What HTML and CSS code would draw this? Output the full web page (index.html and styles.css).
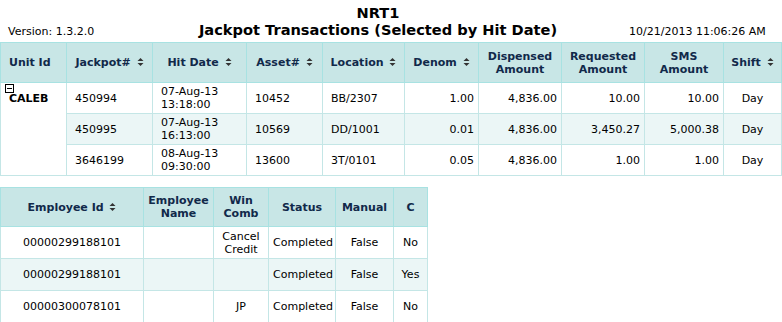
FILE: index.html
```html
<!DOCTYPE html>
<html>
<head>
<meta charset="utf-8">
<link rel="stylesheet" href="styles.css">
</head>
<body>
<div class="top">
  <div class="version">Version: 1.3.2.0</div>
  <div class="titles">
    <div class="t1">NRT1</div>
    <div class="t2">Jackpot Transactions (Selected by Hit Date)</div>
  </div>
  <div class="stamp">10/21/2013 11:06:26 AM</div>
</div>

<table class="grid main">
  <colgroup>
    <col style="width:66px"><col style="width:86px"><col style="width:94px"><col style="width:76px"><col style="width:82px"><col style="width:74px"><col style="width:83px"><col style="width:83px"><col style="width:79px"><col style="width:58px">
  </colgroup>
  <thead>
    <tr>
      <th>Unit Id</th>
      <th>Jackpot# <svg class="sort" viewBox="0 0 7 10" width="7" height="10"><path d="M3.5 1 L6.5 4 H0.5 Z" fill="#333"/><path d="M3.5 9 L6.5 6 H0.5 Z" fill="#333"/></svg></th>
      <th>Hit Date <svg class="sort" viewBox="0 0 7 10" width="7" height="10"><path d="M3.5 1 L6.5 4 H0.5 Z" fill="#333"/><path d="M3.5 9 L6.5 6 H0.5 Z" fill="#333"/></svg></th>
      <th>Asset# <svg class="sort" viewBox="0 0 7 10" width="7" height="10"><path d="M3.5 1 L6.5 4 H0.5 Z" fill="#333"/><path d="M3.5 9 L6.5 6 H0.5 Z" fill="#333"/></svg></th>
      <th>Location <svg class="sort" viewBox="0 0 7 10" width="7" height="10"><path d="M3.5 1 L6.5 4 H0.5 Z" fill="#333"/><path d="M3.5 9 L6.5 6 H0.5 Z" fill="#333"/></svg></th>
      <th>Denom <svg class="sort" viewBox="0 0 7 10" width="7" height="10"><path d="M3.5 1 L6.5 4 H0.5 Z" fill="#333"/><path d="M3.5 9 L6.5 6 H0.5 Z" fill="#333"/></svg></th>
      <th>Dispensed<br>Amount</th>
      <th>Requested<br>Amount</th>
      <th>SMS<br>Amount</th>
      <th>Shift <svg class="sort" viewBox="0 0 7 10" width="7" height="10"><path d="M3.5 1 L6.5 4 H0.5 Z" fill="#333"/><path d="M3.5 9 L6.5 6 H0.5 Z" fill="#333"/></svg></th>
    </tr>
  </thead>
  <tbody>
    <tr>
      <td rowspan="3" class="unit"><span class="minus"></span><b>CALEB</b></td>
      <td class="l">450994</td>
      <td class="l">07-Aug-13<br>13:18:00</td>
      <td class="l">10452</td>
      <td class="l">BB/2307</td>
      <td class="r">1.00</td>
      <td class="r">4,836.00</td>
      <td class="r">10.00</td>
      <td class="r">10.00</td>
      <td class="c">Day</td>
    </tr>
    <tr class="alt">
      <td class="l">450995</td>
      <td class="l">07-Aug-13<br>16:13:00</td>
      <td class="l">10569</td>
      <td class="l">DD/1001</td>
      <td class="r">0.01</td>
      <td class="r">4,836.00</td>
      <td class="r">3,450.27</td>
      <td class="r">5,000.38</td>
      <td class="c">Day</td>
    </tr>
    <tr>
      <td class="l">3646199</td>
      <td class="l">08-Aug-13<br>09:30:00</td>
      <td class="l">13600</td>
      <td class="l">3T/0101</td>
      <td class="r">0.05</td>
      <td class="r">4,836.00</td>
      <td class="r">1.00</td>
      <td class="r">1.00</td>
      <td class="c">Day</td>
    </tr>
  </tbody>
</table>

<table class="grid emp">
  <colgroup>
    <col style="width:143px"><col style="width:70px"><col style="width:55px"><col style="width:67px"><col style="width:58px"><col style="width:34px">
  </colgroup>
  <thead>
    <tr>
      <th>Employee Id <svg class="sort" viewBox="0 0 7 10" width="7" height="10"><path d="M3.5 1 L6.5 4 H0.5 Z" fill="#333"/><path d="M3.5 9 L6.5 6 H0.5 Z" fill="#333"/></svg></th>
      <th>Employee<br>Name</th>
      <th>Win<br>Comb</th>
      <th>Status</th>
      <th>Manual</th>
      <th>C</th>
    </tr>
  </thead>
  <tbody>
    <tr>
      <td>00000299188101</td>
      <td></td>
      <td>Cancel<br>Credit</td>
      <td>Completed</td>
      <td>False</td>
      <td>No</td>
    </tr>
    <tr class="alt">
      <td>00000299188101</td>
      <td></td>
      <td></td>
      <td>Completed</td>
      <td>False</td>
      <td>Yes</td>
    </tr>
    <tr>
      <td>00000300078101</td>
      <td></td>
      <td>JP</td>
      <td>Completed</td>
      <td>False</td>
      <td>No</td>
    </tr>
  </tbody>
</table>
</body>
</html>
```
FILE: styles.css
```css
html, body {
  margin: 0;
  padding: 0;
  background: #fff;
}
body {
  font-family: "DejaVu Sans", Verdana, sans-serif;
  font-size: 11px;
  color: #000;
}
.top {
  display: flex;
  align-items: flex-end;
  height: 42px;
  box-sizing: border-box;
  padding: 2px 0 4px 8px;
}
.version {
  width: 173px;
  line-height: 13px;
}
.titles {
  flex: 1;
  text-align: center;
  font-weight: bold;
  font-size: 14.6px;
  line-height: 17px;
  color: #000;
}
.stamp {
  width: 207px;
  text-align: left;
  padding-left: 54px;
  box-sizing: border-box;
  line-height: 13px;
}
.grid {
  border-collapse: collapse;
  table-layout: fixed;
}
.main {
  width: 782px;
}
.emp {
  width: 427px;
  margin-top: 11px;
}
.grid th {
  background: #c8e6e6;
  color: #11294a;
  font-weight: bold;
  border: 1px solid #a8e2e2;
  text-align: center;
  padding: 0 3px;
  line-height: 13px;
  white-space: nowrap;
}
.main th {
  height: 39px;
}
.emp th {
  height: 38px;
}
.main th:first-child {
  text-align: left;
  padding-left: 8px;
}
.grid td {
  border: 1px solid #c4e6e6;
  line-height: 13px;
  height: 30px;
  padding: 0 4px;
  text-align: center;
  vertical-align: middle;
}
.emp td {
  height: 31px;
}
.grid tr.alt td {
  background: #ebf6f6;
}
.grid td.l {
  text-align: left;
  padding-left: 8px;
}
.grid td.r {
  text-align: right;
}
.grid td.c {
  text-align: center;
}
.grid td.unit {
  vertical-align: top;
  text-align: left;
  padding: 1px 3px 0 3px;
  background: #fff;
}
.unit b {
  display: block;
  padding-left: 5px;
  line-height: 11px;
}
.minus {
  display: block;
  width: 7px;
  height: 7px;
  border: 1px solid #000;
  position: relative;
  margin-left: 1px;
}
.minus::after {
  content: "";
  position: absolute;
  left: 1px;
  right: 1px;
  top: 3px;
  height: 1px;
  background: #000;
}
.sort {
  vertical-align: -1px;
  margin-left: 2px;
}
```
